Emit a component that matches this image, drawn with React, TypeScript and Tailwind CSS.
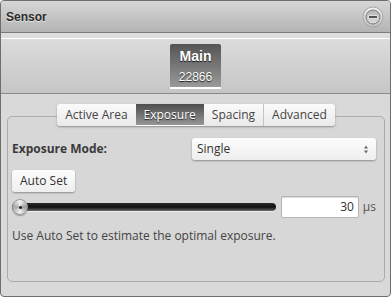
import React from 'react';

const tabs = ['Active Area', 'Exposure', 'Spacing', 'Advanced'];

const CollapseIcon = () => (
  <svg width="22" height="22" viewBox="0 0 22 22">
    <defs>
      <linearGradient id="ring" x1="0" y1="0" x2="0" y2="1">
        <stop offset="0" stopColor="#f2f2f2" />
        <stop offset="1" stopColor="#bdbdbd" />
      </linearGradient>
      <linearGradient id="core" x1="0" y1="0" x2="0" y2="1">
        <stop offset="0" stopColor="#b5b5b5" />
        <stop offset="1" stopColor="#dcdcdc" />
      </linearGradient>
    </defs>
    <circle cx="11" cy="11" r="10" fill="url(#ring)" stroke="#a6a6a6" />
    <circle cx="11" cy="11" r="7" fill="url(#core)" stroke="#7a7a7a" />
    <rect x="6.5" y="9.5" width="9" height="3" rx="0.5" fill="#555" stroke="#f4f4f4" strokeWidth="0.8" />
  </svg>
);

const SelectArrows = () => (
  <svg width="6" height="9" viewBox="0 0 6 9">
    <path d="M3 0.5 L5 3.5 H1 Z" fill="#666" />
    <path d="M3 8.5 L5 5.5 H1 Z" fill="#666" />
  </svg>
);

export default function App() {
  return (
    <div className="w-[391px] h-[297px] flex flex-col overflow-hidden rounded-[4px] border border-[#6e6e6e] bg-[#d9d9d9] font-['Open_Sans',sans-serif] text-[#333]">
      {/* Header */}
      <div className="h-[32px] shrink-0 flex items-center justify-between pl-[5px] pr-[6px] border-b border-[#7a7a7a] bg-gradient-to-b from-[#d6d6d6] to-[#b4b4b4]">
        <span className="font-['Liberation_Sans',sans-serif] font-bold text-[12px] text-[#2b2b2b] [text-shadow:0_1px_0_rgba(255,255,255,0.6)]">
          Sensor
        </span>
        <button className="w-[22px] h-[22px] flex items-center justify-center">
          <CollapseIcon />
        </button>
      </div>

      {/* Sensor selector */}
      <div className="h-[61px] shrink-0 pt-[5px] border-b border-[#8a8a8a] bg-gradient-to-b from-[#dedede] to-[#c6c6c6]">
        <div className="border-t border-white flex justify-center pt-[5px]">
          <div className="w-[51px] h-[45px] flex flex-col items-center rounded-t-[2px] border-b-2 border-white bg-gradient-to-b from-[#555555] to-[#9a9a9a] text-white [text-shadow:0_1px_1px_rgba(0,0,0,0.8)]">
            <span className="mt-[3px] font-['Liberation_Sans',sans-serif] font-bold text-[14px] leading-[18px]">Main</span>
            <span className="mt-[4px] font-['Liberation_Sans',sans-serif] text-[12px] leading-[16px]">22866</span>
          </div>
        </div>
      </div>

      {/* Body */}
      <div className="flex-1">
        <div className="ml-[6px] mt-[22px] w-[378px] h-[166px] rounded-[5px] border border-[#ababab] bg-[#d7d7d7] pl-[4px] pr-[8px]">
          {/* Tabs */}
          <div className="-mt-[13px] flex justify-center pl-[4px]">
            <div className="flex h-[22px] rounded-[3px] shadow-[0_1px_2px_rgba(0,0,0,0.35)] text-[12px] leading-[22px] text-[#444]">
              {tabs.map((tab, i) => {
                const active = tab === 'Exposure';
                return (
                  <div
                    key={tab}
                    className={
                      active
                        ? 'px-[8px] border-b border-white bg-gradient-to-b from-[#4e4e4e] to-[#979797] text-white [text-shadow:0_1px_1px_rgba(0,0,0,0.7)]'
                        : i === 3
                        ? 'px-[8px] bg-gradient-to-b from-[#fbfbfb] to-[#e9e9e9] rounded-r-[3px] border-l border-[#c4c4c4]'
                        : i === 0
                        ? 'px-[8px] bg-gradient-to-b from-[#fbfbfb] to-[#e9e9e9] rounded-l-[3px]'
                        : 'px-[8px] bg-gradient-to-b from-[#fbfbfb] to-[#e9e9e9]'
                    }
                  >
                    {tab}
                  </div>
                );
              })}
            </div>
          </div>

          {/* Exposure mode */}
          <div className="mt-[12px] flex items-center justify-between">
            <span className="font-bold text-[12px] text-[#3a3a3a]">Exposure Mode:</span>
            <div className="w-[184px] h-[22px] flex items-center justify-between pl-[5px] pr-[7px] rounded-[3px] bg-gradient-to-b from-[#fdfdfd] to-[#eeeeee] shadow-[0_1px_2px_rgba(0,0,0,0.35)] text-[12px] text-[#333]">
              <span>Single</span>
              <SelectArrows />
            </div>
          </div>

          {/* Auto set */}
          <div className="mt-[10px] flex">
            <button className="h-[22px] px-[8px] rounded-[3px] bg-gradient-to-b from-[#fdfdfd] to-[#eeeeee] shadow-[0_1px_2px_rgba(0,0,0,0.35)] text-[12px] text-[#333]">
              Auto Set
            </button>
          </div>

          {/* Slider */}
          <div className="mt-[4px] flex items-center">
            <div className="relative w-[266px] h-[22px] flex items-center">
              <div className="w-full h-[8px] rounded-full bg-gradient-to-b from-[#2a2a2a] via-[#111] to-[#6a6a6a] shadow-[0_1px_0_rgba(255,255,255,0.6)]" />
              <div className="absolute left-0 top-[3px] w-[16px] h-[16px] rounded-full border border-[#9a9a9a] bg-[conic-gradient(#f4f4f4,#9c9c9c,#f0f0f0,#a8a8a8,#f4f4f4)] shadow-[0_1px_1px_rgba(0,0,0,0.3)] flex items-center justify-center">
                <div className="w-[3px] h-[3px] rounded-full bg-[#222]" />
              </div>
            </div>
            <div className="ml-[5px] w-[78px] h-[22px] flex items-center justify-end pr-[4px] rounded-[2px] border border-[#b5b5b5] bg-white shadow-[inset_0_1px_1px_rgba(0,0,0,0.15)] text-[12px] text-[#333]">
              30
            </div>
            <span className="ml-[4px] text-[12px] text-[#555]">µs</span>
          </div>

          {/* Hint */}
          <p className="mt-[9px] text-[12px] leading-[18px] text-[#444]">
            Use Auto Set to estimate the optimal exposure.
          </p>
        </div>
      </div>
    </div>
  );
}
